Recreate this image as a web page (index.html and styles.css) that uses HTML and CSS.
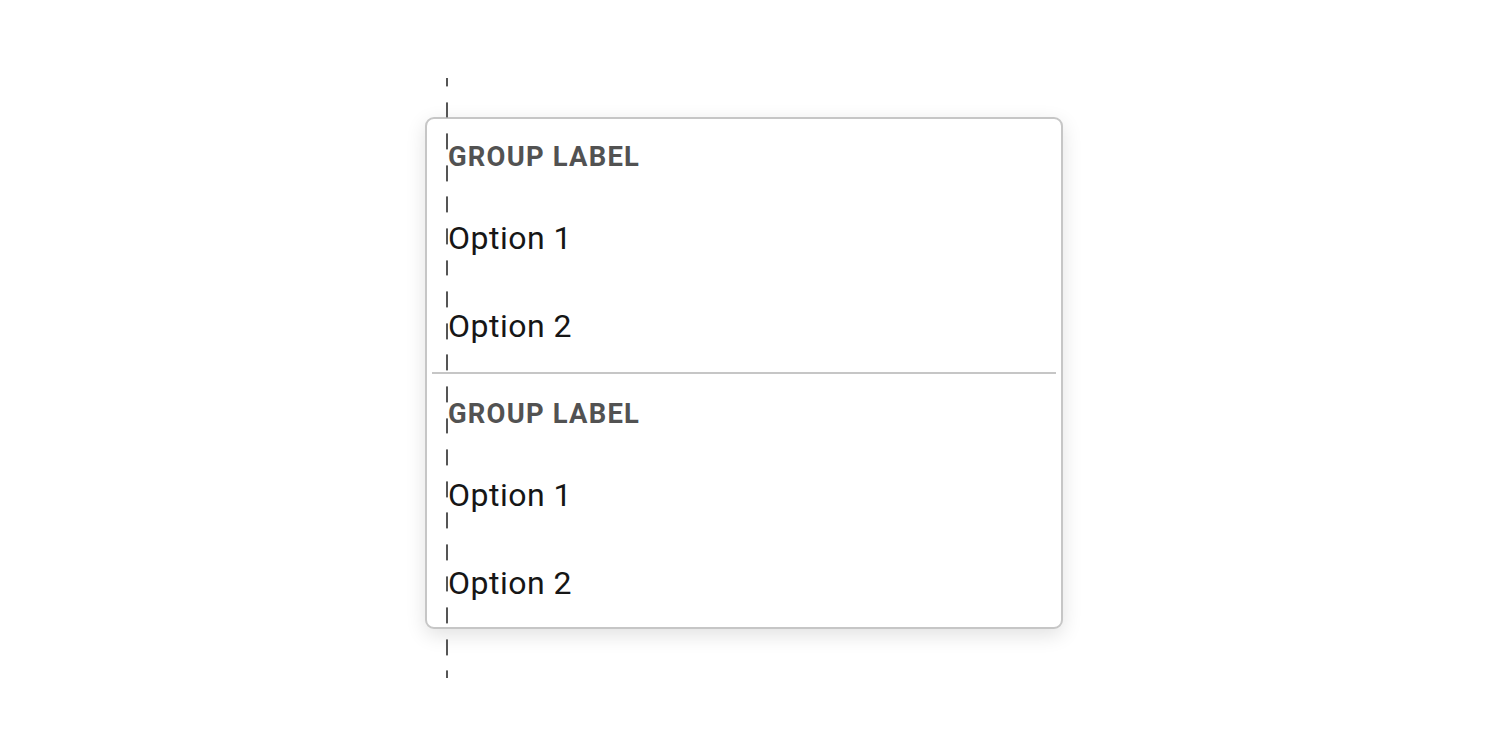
FILE: index.html
```html
<!DOCTYPE html>
<html lang="en">
<head>
<meta charset="utf-8">
<title>Grouped list</title>
<link rel="stylesheet" href="styles.css">
</head>
<body>
<main class="stage">
  <div class="menu" role="listbox">
    <div class="group">
      <div class="group-label">GROUP LABEL</div>
      <div class="option">Option 1</div>
      <div class="option">Option 2</div>
    </div>
    <hr class="divider">
    <div class="group">
      <div class="group-label">GROUP LABEL</div>
      <div class="option">Option 1</div>
      <div class="option">Option 2</div>
    </div>
    <div class="guide" aria-hidden="true"></div>
  </div>
</main>
</body>
</html>
```

FILE: styles.css
```css
html, body {
  margin: 0;
  padding: 0;
  background: #ffffff;
}

.stage {
  width: 100vw;
  height: 745px;
  display: flex;
  align-items: center;
  justify-content: center;
}

.menu {
  position: relative;
  box-sizing: border-box;
  width: 638px;
  border: 2px solid #c6c6c6;
  border-radius: 9px;
  background: #ffffff;
  box-shadow: 0 6px 20px rgba(0, 0, 0, 0.12);
  display: flex;
  flex-direction: column;
  margin-top: 1px;
}

.group {
  display: flex;
  flex-direction: column;
}

.group-label {
  height: 75px;
  display: flex;
  align-items: center;
  padding-left: 21px;
  font-family: Roboto, "Liberation Sans", sans-serif;
  font-weight: 700;
  font-size: 27.4px;
  letter-spacing: 1.2px;
  color: #525252;
}

.option {
  height: 88px;
  display: flex;
  align-items: center;
  padding-left: 21px;
  font-family: Roboto, "Liberation Sans", sans-serif;
  font-weight: 400;
  font-size: 32px;
  letter-spacing: 0.5px;
  color: #161616;
}

.divider {
  border: 0;
  height: 2px;
  background: #c6c6c6;
  margin: 2px 5px;
}

.guide {
  position: absolute;
  left: 19px;
  top: -41px;
  width: 2px;
  height: 600px;
  background-image: repeating-linear-gradient(to bottom, #555555 0 15.8px, transparent 15.8px 31.6px);
  background-position: 0 -7.6px;
  pointer-events: none;
}
```
